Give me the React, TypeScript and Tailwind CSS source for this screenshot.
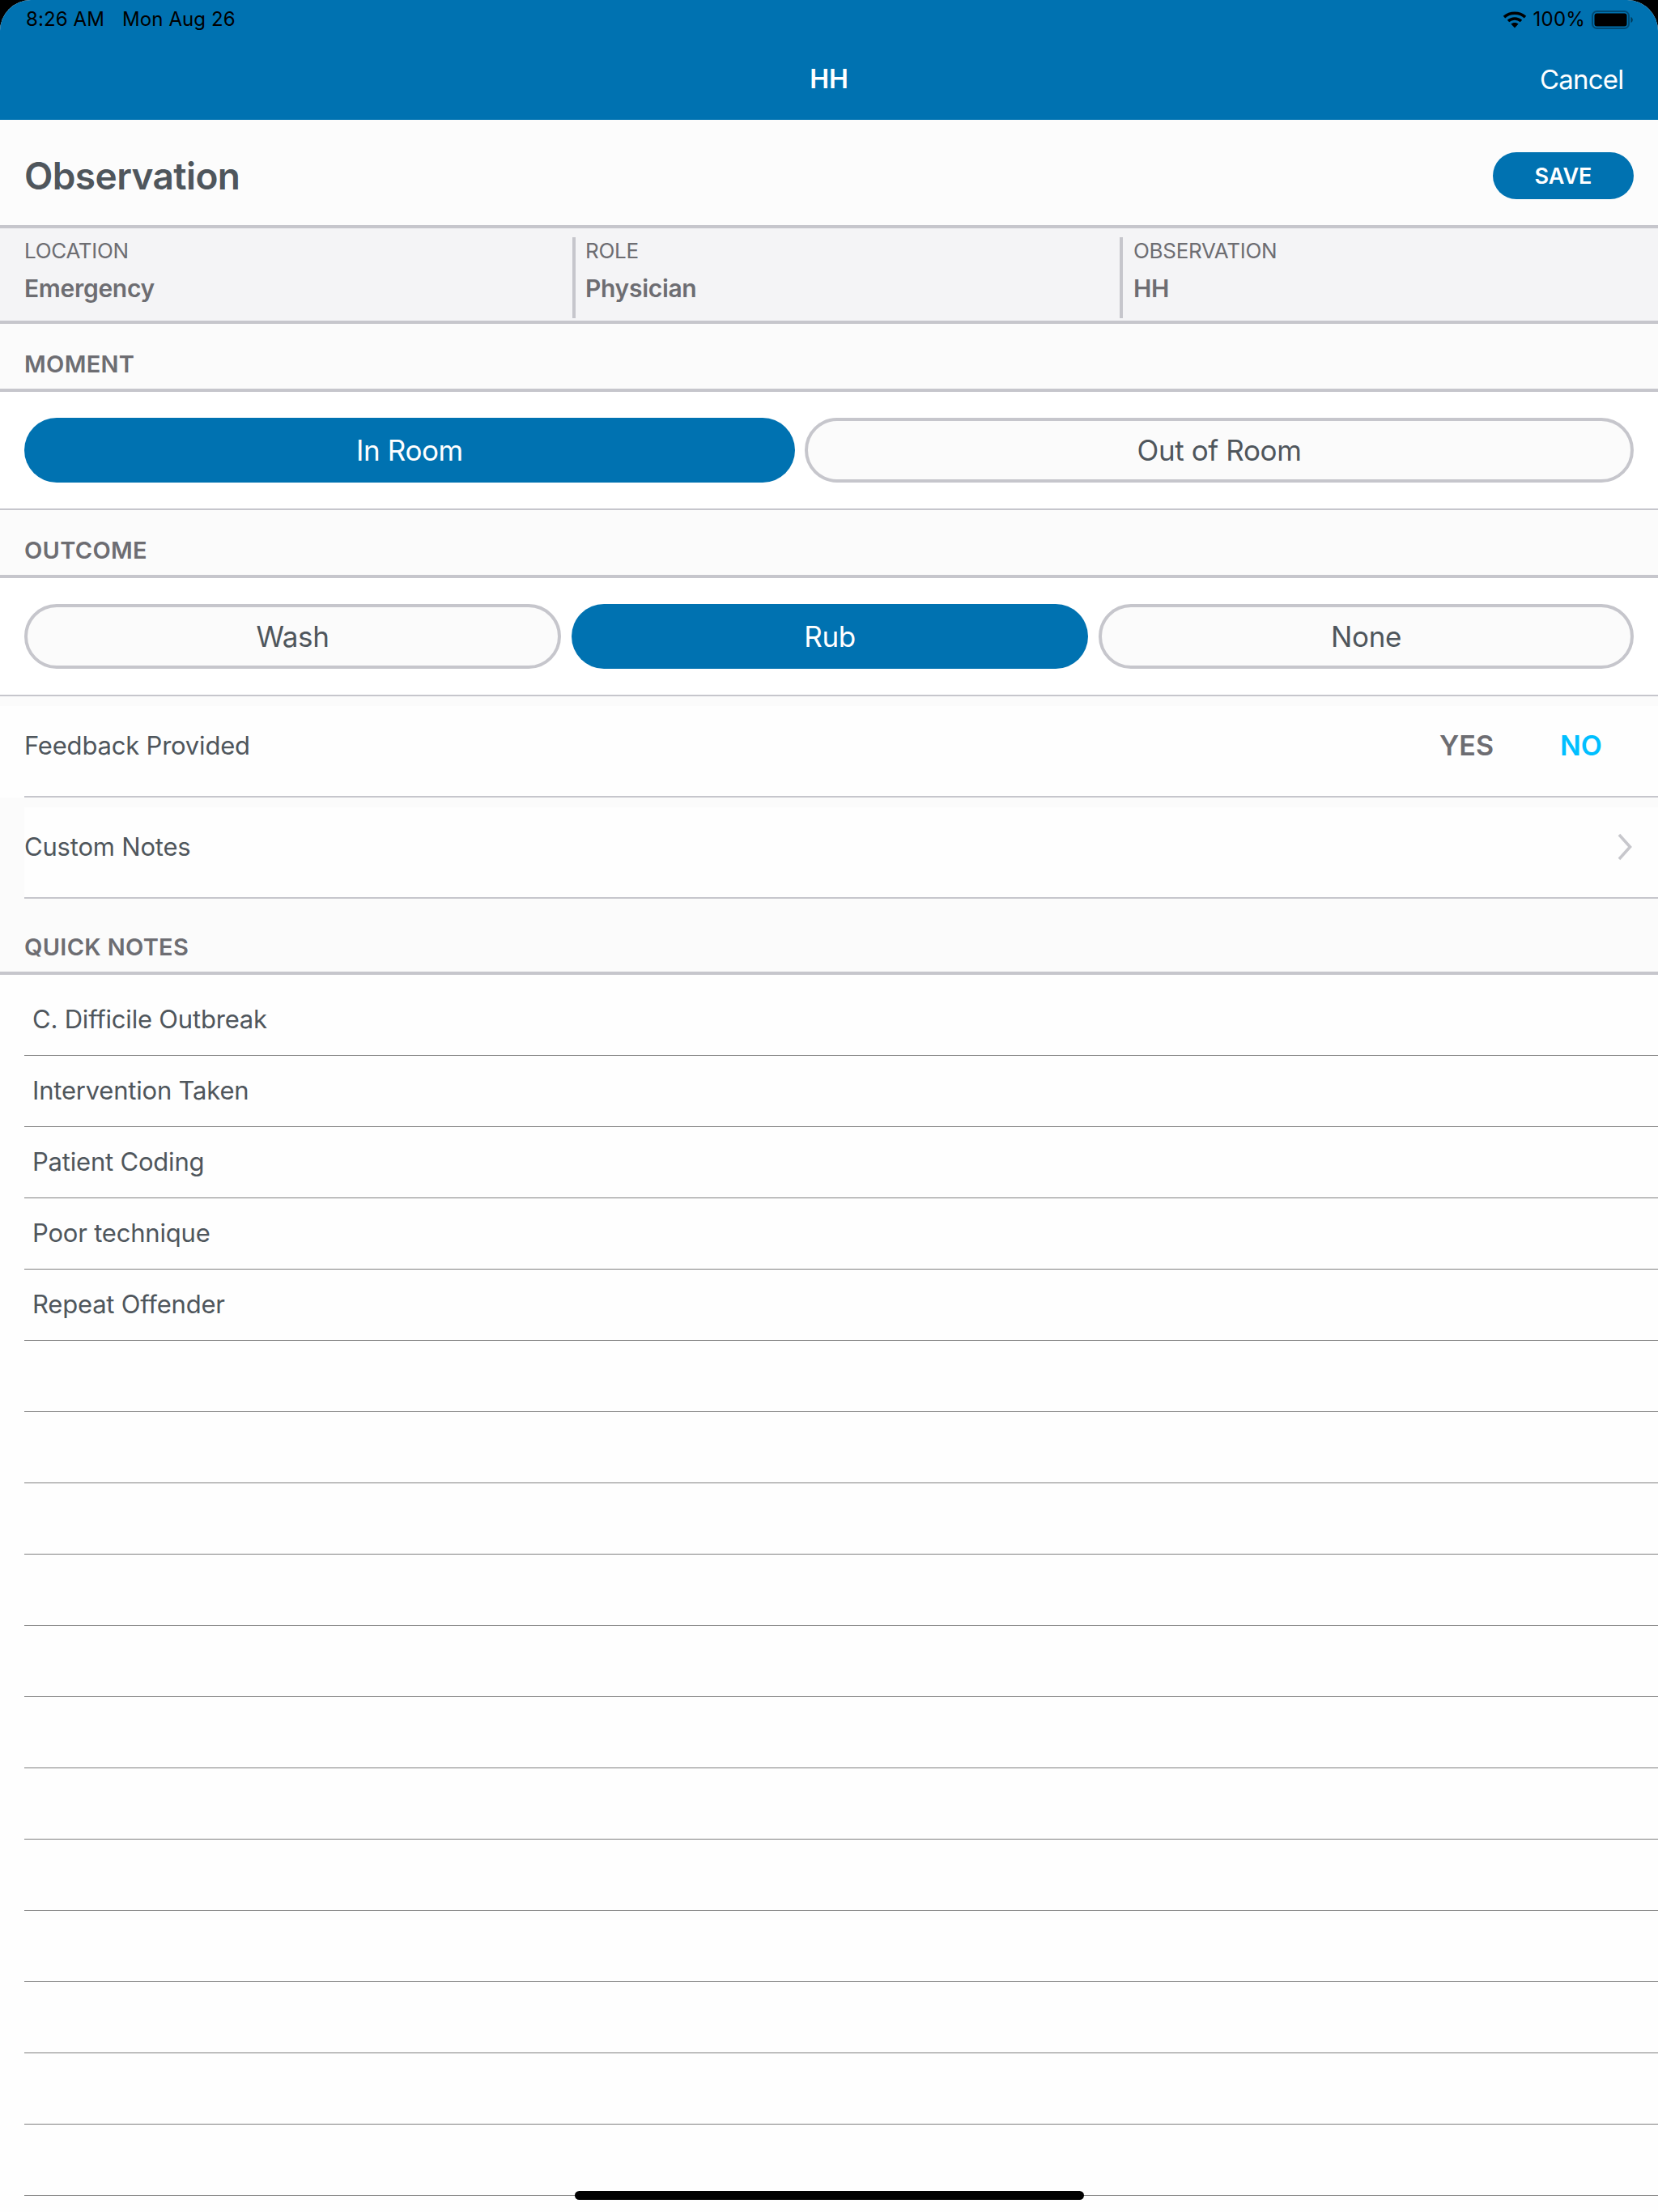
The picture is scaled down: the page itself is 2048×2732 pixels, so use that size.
import React from "react";

const notes = ["C. Difficile Outbreak", "Intervention Taken", "Patient Coding", "Poor technique", "Repeat Offender", "", "", "", "", "", "", "", "", "", "", "", ""];

function Wifi() {
  return (
    <svg width="30" height="22" viewBox="0 0 30 22" fill="none" stroke="#000">
      <path d="M2 8.2C9.2 1.6 20.8 1.6 28 8.2" strokeWidth="3.6" />
      <path d="M7 13C11.6 8.9 18.4 8.9 23 13" strokeWidth="3.6" />
      <path d="M15 21.5L10.4 16.6C13 14.5 17 14.5 19.6 16.6Z" fill="#000" stroke="none" />
    </svg>
  );
}

function Battery() {
  return (
    <svg width="52" height="23" viewBox="0 0 52 23">
      <rect x="1" y="1" width="45" height="21" rx="5.5" fill="none" stroke="#000" strokeOpacity="0.35" strokeWidth="2" />
      <rect x="3.500" y="3.500" width="40" height="16" rx="3" fill="#000" />
      <path d="M48.500 8v7c1.400-.5 2.300-2 2.300-3.500S49.900 8.500 48.500 8Z" fill="#000" fillOpacity="0.5" />
    </svg>
  );
}

function SectionHeader({ title, className }: { title: string; className: string }) {
  return (
    <div className={`flex items-end bg-[#fbfbfb] pl-[30px] border-b-4 border-[#c6c6cc] ${className}`}>
      <span className="text-[29px] leading-[34px] font-semibold tracking-[0.3px] text-[#6d6d72]">{title}</span>
    </div>
  );
}

function Pill({ label, active, className }: { label: string; active?: boolean; className: string }) {
  return (
    <div
      className={`flex h-[80px] items-center justify-center rounded-[40px] text-[35px] leading-[40px] tracking-[-0.4px] ${
        active ? "bg-[#0072b1] text-white" : "border-4 border-[#c6c6cc] bg-[#fbfbfb] text-[#4f565c]"
      } ${className}`}
    >
      {label}
    </div>
  );
}

function Info({ label, value, className }: { label: string; value: string; className: string }) {
  return (
    <div className={`flex h-[100px] flex-col ${className}`}>
      <span className="mt-[1px] text-[26px] leading-[32px] tracking-[-0.3px] text-[#6d6d72]">{label}</span>
      <span className="mt-[12px] text-[30px] leading-[36px] font-semibold tracking-[-0.3px] text-[#6d6d72]">{value}</span>
    </div>
  );
}

export default function App() {
  return (
    <div className="relative h-[2732px] w-[2048px] overflow-hidden bg-black font-[family-name:Inter,sans-serif]">
      <div className="flex h-full flex-col overflow-hidden rounded-t-[38px] bg-[#fefefe]">
        <header className="h-[148px] shrink-0 bg-[#0072b1]">
          <div className="flex h-[48px] items-center justify-between pl-[32px] pr-[30px] text-[24px] leading-[48px] tracking-[0.1px] text-black">
            <div className="flex gap-[22px]">
              <span>8:26 AM</span>
              <span>Mon Aug 26</span>
            </div>
            <div className="flex items-center gap-[8px]">
              <Wifi />
              <span className="tracking-[0.2px]">100%</span>
              <Battery />
            </div>
          </div>
          <div className="flex h-[100px] items-start justify-between pt-[18px] pl-[147px]">
            <div className="flex-1 text-center text-[32px] leading-[64px] font-semibold text-white">HH</div>
            <div className="w-[147px] pl-[1px] text-[33px] leading-[64px] tracking-[-0.8px] text-white">Cancel</div>
          </div>
        </header>

        <div className="flex h-[134px] shrink-0 items-center justify-between border-b-4 border-[#c6c6cc] bg-[#fcfcfc] pl-[30px] pr-[30px] pt-[8px]">
          <h1 className="text-[46px] leading-[52px] font-semibold tracking-[-0.6px] text-[#4f565c]">Observation</h1>
          <div className="flex h-[58px] w-[174px] items-center justify-center rounded-[29px] bg-[#0072b1] pt-[1px] text-[27px] leading-[32px] font-semibold text-white">
            SAVE
          </div>
        </div>

        <div className="flex h-[118px] shrink-0 border-b-4 border-[#c6c6cc] bg-[#f4f4f6] pl-[30px] pt-[11px]">
          <Info label="LOCATION" value="Emergency" className="w-[677px]" />
          <Info label="ROLE" value="Physician" className="w-[676px] border-l-4 border-[#c6c6cc] pl-[12px]" />
          <Info label="OBSERVATION" value="HH" className="flex-1 border-l-4 border-[#c6c6cc] pl-[13px]" />
        </div>

        <SectionHeader title="MOMENT" className="h-[84px] shrink-0 pb-[13px]" />
        <div className="flex h-[146px] shrink-0 gap-[12px] border-b-2 border-[#c6c6cc] bg-white px-[30px] pt-[32px]">
          <Pill label="In Room" active className="w-[952px]" />
          <Pill label="Out of Room" className="flex-1" />
        </div>

        <SectionHeader title="OUTCOME" className="h-[84px] shrink-0 pb-[13px]" />
        <div className="flex h-[146px] shrink-0 gap-[13px] border-b-2 border-[#c6c6cc] bg-white px-[30px] pt-[32px]">
          <Pill label="Wash" className="w-[663px]" />
          <Pill label="Rub" active className="w-[638px]" />
          <Pill label="None" className="flex-1" />
        </div>

        <div className="shrink-0 bg-[#fbfbfb] pt-[12px]">
          <div className="ml-0 h-[113px] bg-[#fefefe] pl-[30px]">
            <div className="flex h-full items-center justify-between border-b-2 border-[#c6c6cc] pr-[69px] pb-[13px]">
              <span className="text-[31px] leading-[40px] tracking-[-0.2px] text-[#4f565c]">Feedback Provided</span>
              <div className="flex items-center gap-[82px] text-[34px] leading-[40px] font-semibold">
                <span className="text-[#6d6d72]">YES</span>
                <span className="text-[#00bfff]">NO</span>
              </div>
            </div>
          </div>
        </div>

        <div className="shrink-0 bg-[#fbfbfb] pl-[30px] pt-[12px]">
          <div className="flex h-[113px] items-center justify-between border-b-2 border-[#c6c6cc] bg-[#fefefe] pb-[13px] pr-[30px]">
            <span className="text-[31px] leading-[40px] tracking-[-0.2px] text-[#4f565c]">Custom Notes</span>
            <svg width="20" height="34" viewBox="0 0 20 34" fill="none" className="mr-[1px]">
              <path d="M3 2L16.500 17L3 32" stroke="#c7c7cc" strokeWidth="3.600" />
            </svg>
          </div>
        </div>

        <SectionHeader title="QUICK NOTES" className="h-[94px] shrink-0 pb-[13px]" />

        <div className="flex flex-col pl-[30px] pt-[12px]">
          {notes.map((n, i) => (
            <div key={i} className="flex h-[88px] shrink-0 items-center border-b border-[#808080] pb-[1px] pl-[10px]">
              <span className="text-[31px] leading-[40px] tracking-[-0.2px] text-[#4f565c]">{n}</span>
            </div>
          ))}
        </div>
      </div>
      <div className="absolute bottom-[15px] left-[710px] h-[11px] w-[629px] rounded-full bg-black" />
    </div>
  );
}
